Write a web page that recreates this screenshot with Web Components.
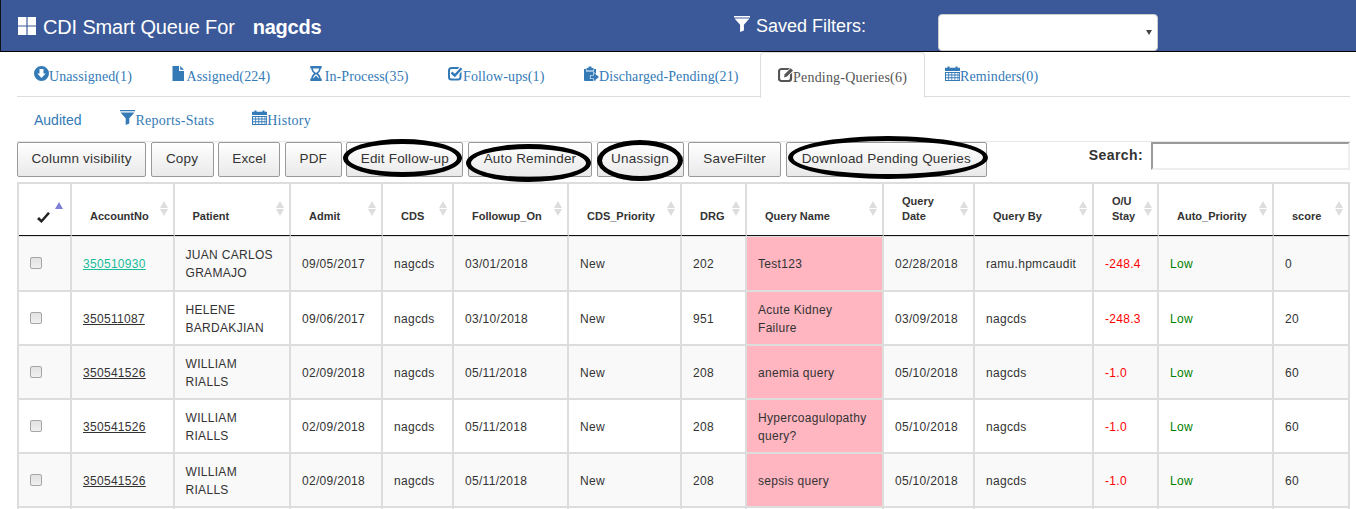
<!DOCTYPE html>
<html>
<head>
<meta charset="utf-8">
<title>CDI Smart Queue</title>
<style>
  html, body { margin: 0; height: 509px; overflow: hidden; background: #fff; }
  body { font-family: "Liberation Sans", Arial, sans-serif; color: #333; }
</style>
</head>
<body>
<queue-header user="nagcds"></queue-header>
<queue-tabs>
  <tab-link icon="circle-down">Unassigned(1)</tab-link>
  <tab-link icon="file">Assigned(224)</tab-link>
  <tab-link icon="hourglass">In-Process(35)</tab-link>
  <tab-link icon="check">Follow-ups(1)</tab-link>
  <tab-link icon="clipboard">Discharged-Pending(21)</tab-link>
  <tab-link icon="edit" active>Pending-Queries(6)</tab-link>
  <tab-link icon="calendar">Reminders(0)</tab-link>
</queue-tabs>
<queue-subnav></queue-subnav>
<queue-toolbar>
  <tool-button style="width:129px">Column visibility</tool-button>
  <tool-button style="width:63px">Copy</tool-button>
  <tool-button style="width:62px">Excel</tool-button>
  <tool-button style="width:57px">PDF</tool-button>
  <tool-button ring style="width:117px;--rt:-4px;--rl:-4px;--rr:0px;--rb:-1px">Edit Follow-up</tool-button>
  <tool-button ring style="width:124px;--rt:1px;--rl:-3px;--rr:0px;--rb:-6px">Auto Reminder</tool-button>
  <tool-button ring style="width:87px;--rt:-3px;--rl:-1px;--rr:0px;--rb:-5px">Unassign</tool-button>
  <tool-button style="width:93px">SaveFilter</tool-button>
  <tool-button ring style="width:201px;--rt:-7px;--rl:1px;--rr:-2px;--rb:-3px">Download Pending Queries</tool-button>
</queue-toolbar>
<queue-table></queue-table>

<script>
const ICONS = {
  'th': '<path d="M0 0h8.400v8.400H0zM9.600 0H18v8.400H9.600zM0 9.600h8.400V18H0zM9.600 9.600H18V18H9.600z"/>',
  'circle-down': '<path fill-rule="evenodd" d="M7.500 0a7.500 7.500 0 1 0 0 15a7.500 7.500 0 0 0 0-15zM5.500 3h4v4.500h2.200L7.500 12L3.300 7.500h2.200z"/>',
  'file': '<path d="M1.500 0H8v5h5v10H1.500zM9.200 0L13 3.800H9.200z"/>',
  'hourglass': '<path d="M.3 0h11.400v2.400H.3zM.3 12.600h11.400V15H.3z"/><path fill="none" stroke="currentColor" stroke-width="1.500" d="M2 2c0 2.800 1.300 4.200 3.300 5.500C3.300 8.800 2 10.200 2 13M10 2c0 2.800-1.300 4.200-3.300 5.500C8.700 8.800 10 10.200 10 13"/><path d="M6 9.500L9 13H3z"/>',
  'check': '<rect x="1" y="2" width="11.500" height="11.500" rx="2.500" fill="none" stroke="currentColor" stroke-width="2"/><path d="M3.500 6.500L6.800 9.500L13.500 2.200" fill="none" stroke="#fff" stroke-width="4.500"/><path d="M3.500 6.500L6.800 9.500L13.500 2.200" fill="none" stroke="currentColor" stroke-width="2.400"/>',
  'clipboard': '<path d="M4.500 2V.5h3V2H9.500v2.500h-7V2z"/><path d="M0 3h2v2.500h8V3h2v12H1a1 1 0 0 1-1-1z"/><path d="M6.500 9.500h3.500V7l5 4l-5 4v-2.500H6.500z" stroke="#fff" stroke-width="1.200" paint-order="stroke"/>',
  'edit': '<rect x="1" y="2" width="12" height="12" rx="2.500" fill="none" stroke="currentColor" stroke-width="2.200"/><path d="M6 10.500L6.700 7.300L12.700 1.300L15 3.600L9 9.600z" stroke="#fff" stroke-width="1.500" paint-order="stroke"/>',
  'calendar': '<path fill-rule="evenodd" d="M0 1.800h2.500V.5h2V1.800h6V.5h2V1.800H15V5H0zM0 6h15v9H0zM1 7v1.600h2.300V7zM4.100 7v1.600h2.300V7zM7.200 7v1.600h2.300V7zM10.300 7v1.600H12.600V7zM13.300 7v1.600H14.200V7zM1 9.600v1.600h2.300V9.600zM4.100 9.600v1.600h2.300V9.600zM7.200 9.600v1.600h2.300V9.600zM10.300 9.600v1.600H12.600V9.600zM13.300 9.600v1.600H14.200V9.600zM1 12.200v1.700h2.300V12.200zM4.100 12.200v1.700h2.300V12.200zM7.200 12.200v1.700h2.300V12.200zM10.300 12.200v1.700H12.600V12.200zM13.300 12.200v1.700H14.200V12.200z"/>',
  'filter': '<path d="M0 0h15v1.300H0zM.5 2.400h14L9.300 8.200V13.500L5.700 15V8.200z"/>'
};

class UiIcon extends HTMLElement {
  connectedCallback() {
    const size = this.getAttribute('size') || 15;
    const vb = this.getAttribute('name') === 'th' ? 18 : 15;
    this.attachShadow({ mode: 'open' });
    this.shadowRoot.innerHTML = `
      <style>
        :host { display: inline-block; flex: none; width: ${size}px; height: ${size}px; line-height: 0; }
        svg { width: 100%; height: 100%; fill: currentColor; display: block; }
      </style>
      <svg viewBox="0 0 ${vb} ${vb}">${ICONS[this.getAttribute('name')]}</svg>`;
  }
}
customElements.define('ui-icon', UiIcon);

class QueueHeader extends HTMLElement {
  connectedCallback() {
    this.attachShadow({ mode: 'open' });
    this.shadowRoot.innerHTML = `
      <style>
        :host {
          display: grid;
          grid-template-columns: 716px 204px 220px;
          align-items: start;
          box-sizing: border-box;
          height: 52px;
          padding-left: 17px;
          background: #3b5998;
          color: #fff;
          border-left: 1px solid #111;
          border-bottom: 1px solid #000;
        }
        .brand { display: flex; align-items: center; height: 51px; font-size: 20px; letter-spacing: -.15px; padding-top: 3px; box-sizing: border-box; }
        .brand ui-icon { margin-right: 7px; margin-top: -3px; }
        .brand b { margin-left: 18px; letter-spacing: -.2px; }
        .saved { display: flex; align-items: center; height: 50px; font-size: 18px; }
        .saved ui-icon { margin-right: 6px; margin-top: -3px; }
        .saved span { margin-top: 3px; }
        .select {
          position: relative;
          box-sizing: border-box;
          margin-top: 14px;
          height: 37px;
          background: #fff;
          border: 1px solid #ccc;
          border-radius: 4px;
        }
        .select::after {
          content: "";
          position: absolute;
          right: 5px;
          top: 15px;
          border: 3.500px solid transparent;
          border-top: 5px solid #444;
          border-bottom: 0;
        }
      </style>
      <div class="brand"><ui-icon name="th" size="18"></ui-icon><span>CDI Smart Queue For</span><b>${this.getAttribute('user')}</b></div>
      <div class="saved"><ui-icon name="filter" size="16"></ui-icon><span>Saved Filters:</span></div>
      <div class="select"></div>`;
  }
}
customElements.define('queue-header', QueueHeader);

class QueueTabs extends HTMLElement {
  connectedCallback() {
    this.attachShadow({ mode: 'open' });
    this.shadowRoot.innerHTML = `
      <style>
        :host {
          display: flex;
          box-sizing: border-box;
          height: 45px;
          margin: 0 6px 0 17px;
          border-bottom: 1px solid #ddd;
        }
      </style>
      <slot></slot>`;
  }
}
customElements.define('queue-tabs', QueueTabs);

class TabLink extends HTMLElement {
  connectedCallback() {
    this.attachShadow({ mode: 'open' });
    this.shadowRoot.innerHTML = `
      <style>
        :host {
          display: flex;
          align-items: center;
          box-sizing: border-box;
          height: 45px;
          padding: 4px 17px 0;
          margin-right: 3.500px;
          border: 1px solid transparent;
          border-bottom: 0;
          color: #337ab7;
          font: 14px "Liberation Serif", "Times New Roman", serif;
          letter-spacing: .1px;
          white-space: nowrap;
        }
        :host(:first-child) { padding-left: 16px; }
        :host([active]) {
          color: #555;
          background: #fff;
          border-color: #ddd;
          border-radius: 4px 4px 0 0;
          margin-bottom: -1px;
          height: 46px;
          margin-right: 2px;
          letter-spacing: .2px;
        }
        ui-icon { margin-top: -7px; }
      </style>
      <ui-icon name="${this.getAttribute('icon')}"></ui-icon><slot></slot>`;
  }
}
customElements.define('tab-link', TabLink);

class QueueSubnav extends HTMLElement {
  connectedCallback() {
    this.attachShadow({ mode: 'open' });
    this.shadowRoot.innerHTML = `
      <style>
        :host {
          display: flex;
          align-items: center;
          box-sizing: border-box;
          height: 44px;
          padding-left: 34px;
          color: #337ab7;
          white-space: nowrap;
        }
        .plain { font: 14px "Liberation Sans", Arial, sans-serif; margin-right: 39px; margin-top: 1px; }
        .item { display: flex; align-items: center; font: 14px "Liberation Serif", "Times New Roman", serif; letter-spacing: .25px; margin-right: 38px; padding-top: 3px; }
        ui-icon { margin-top: -7px; }
      </style>
      <span class="plain">Audited</span>
      <span class="item"><ui-icon name="filter"></ui-icon>Reports-Stats</span>
      <span class="item"><ui-icon name="calendar"></ui-icon>History</span>`;
  }
}
customElements.define('queue-subnav', QueueSubnav);

class QueueToolbar extends HTMLElement {
  connectedCallback() {
    this.attachShadow({ mode: 'open' });
    this.shadowRoot.innerHTML = `
      <style>
        :host {
          display: flex;
          align-items: flex-start;
          position: relative;
          z-index: 2;
          box-sizing: border-box;
          height: 41px;
          margin: 0 6px 0 17px;
          border-top: 1px solid #e6e6e6;
        }
        .search {
          margin-left: auto;
          display: flex;
          align-items: flex-start;
          font-size: 14px;
          font-weight: bold;
          letter-spacing: .4px;
        }
        .search span { margin: 5px 8px 0 0; }
        input {
          box-sizing: border-box;
          width: 199px;
          height: 28px;
          margin: 0;
          padding: 0;
          border: 2px solid;
          border-color: #9a9a9a #eee #eee #9a9a9a;
          outline: 0;
        }
      </style>
      <slot></slot>
      <label class="search"><span>Search:</span><input type="text"></label>`;
  }
}
customElements.define('queue-toolbar', QueueToolbar);

class ToolButton extends HTMLElement {
  connectedCallback() {
    this.attachShadow({ mode: 'open' });
    this.shadowRoot.innerHTML = `
      <style>
        :host {
          display: block;
          position: relative;
          box-sizing: border-box;
          height: 35px;
          line-height: 32px;
          margin-right: 4.600px;
          font-size: 13.500px;
          letter-spacing: .2px;
          text-align: center;
          color: #333;
          white-space: nowrap;
          background: linear-gradient(#fff, #e9e9e9);
          border: 1px solid #999;
          border-radius: 2px;
        }
        :host([ring])::after {
          content: "";
          position: absolute;
          top: var(--rt);
          left: var(--rl);
          right: var(--rr);
          bottom: var(--rb);
          border: 5px solid #000;
          border-radius: 50%;
        }
      </style>
      <slot></slot>`;
  }
}
customElements.define('tool-button', ToolButton);

const COLUMNS = [
  ['', 53], ['AccountNo', 102.500], ['Patient', 116.500], ['Admit', 92], ['CDS', 71],
  ['Followup_On', 115], ['CDS_Priority', 113], ['DRG', 65], ['Query Name', 137],
  ['Query<br>Date', 91], ['Query By', 119], ['O/U<br>Stay', 65], ['Auto_Priority', 115], ['score', 76]
];

const ROWS = [
  ['350510930', 'JUAN CARLOS<br>GRAMAJO', '09/05/2017', '03/01/2018', '202', 'Test123', '02/28/2018', 'ramu.hpmcaudit', '-248.4', '0'],
  ['350511087', 'HELENE<br>BARDAKJIAN', '09/06/2017', '03/10/2018', '951', 'Acute Kidney<br>Failure', '03/09/2018', 'nagcds', '-248.3', '20'],
  ['350541526', 'WILLIAM<br>RIALLS', '02/09/2018', '05/11/2018', '208', 'anemia query', '05/10/2018', 'nagcds', '-1.0', '60'],
  ['350541526', 'WILLIAM<br>RIALLS', '02/09/2018', '05/11/2018', '208', 'Hypercoagulopathy<br>query?', '05/10/2018', 'nagcds', '-1.0', '60'],
  ['350541526', 'WILLIAM<br>RIALLS', '02/09/2018', '05/11/2018', '208', 'sepsis query', '05/10/2018', 'nagcds', '-1.0', '60']
];

class QueueTable extends HTMLElement {
  connectedCallback() {
    this.attachShadow({ mode: 'open' });
    const cols = COLUMNS.map(c => `<col style="width:${c[1]}px">`).join('');
    const head = COLUMNS.map((c, i) => i === 0
      ? `<th class="tick"><svg viewBox="0 0 13 11" width="13" height="11"><path d="M0 7l2-2l2.500 2.500L11 0l2 1.500L4.500 11z"/></svg><i class="asc"></i></th>`
      : `<th>${c[0]}<i class="up"></i><i class="down"></i></th>`).join('');
    const body = ROWS.map((r, i) => `<tr>
        <td class="box"><input type="checkbox"></td>
        <td><a class="${i === 0 ? 'seen' : ''}">${r[0]}</a></td>
        <td>${r[1]}</td>
        <td>${r[2]}</td>
        <td>nagcds</td>
        <td>${r[3]}</td>
        <td>New</td>
        <td>${r[4]}</td>
        <td class="pink">${r[5]}</td>
        <td>${r[6]}</td>
        <td>${r[7]}</td>
        <td class="red">${r[8]}</td>
        <td class="green">Low</td>
        <td>${r[9]}</td>
      </tr>`).join('');
    const blanks = COLUMNS.map(() => '<td></td>').join('');
    this.shadowRoot.innerHTML = `
      <style>
        :host { display: block; margin: 0 6px 0 17px; }
        table {
          table-layout: fixed;
          width: 1333px;
          border-collapse: separate;
          border-spacing: 0;
          border-top: 2px solid #ddd;
          border-left: 2px solid #ddd;
          color: #333;
        }
        th, td { border-right: 2px solid #ddd; box-sizing: border-box; }
        th {
          position: relative;
          height: 52px;
          padding: 0 4px 11px 18px;
          vertical-align: bottom;
          text-align: left;
          font-size: 11px;
          line-height: 15px;
          border-bottom: 1px solid #111;
        }
        th.tick { padding: 0 0 12px 18px; }
        th.tick svg { display: block; fill: #222; }
        th i { position: absolute; width: 0; height: 0; border: 4px solid transparent; right: 5px; }
        th i.up { top: 17px; border-top: 0; border-bottom: 7px solid #ddd; }
        th i.down { top: 25px; border-bottom: 0; border-top: 7px solid #ddd; }
        th i.asc { top: 18px; right: 7px; border-top: 0; border-bottom: 7px solid #7f7fd9; }
        td {
          height: 54px;
          padding: 1px 4px 0 11px;
          font-size: 12px;
          line-height: 18px;
          letter-spacing: .3px;
          border-bottom: 2px solid #ddd;
        }
        tbody tr:nth-child(odd) td { background: #f9f9f9; }
        tbody tr:first-child td { border-top: 1px solid #ddd; height: 56px; }
        tbody tr td.pink { background: #ffb6c1; }
        tbody tr.tail td { height: 1px; padding: 0; border-bottom: 0; line-height: 0; font-size: 0; }
        td.red { color: #f00; }
        td.green { color: #008000; }
        a { color: #333; text-decoration: underline; }
        a.seen { color: #1abc9c; }
        input {
          appearance: none;
          display: block;
          box-sizing: border-box;
          width: 12px;
          height: 12px;
          margin: -2px 0 0;
          border: 1px solid #a6a6a6;
          border-radius: 2px;
          background: linear-gradient(#e2e2e2, #f0f0f0);
        }
      </style>
      <table>
        <colgroup>${cols}</colgroup>
        <thead><tr>${head}</tr></thead>
        <tbody>${body}<tr class="tail">${blanks}</tr></tbody>
      </table>`;
  }
}
customElements.define('queue-table', QueueTable);
</script>
</body>
</html>
